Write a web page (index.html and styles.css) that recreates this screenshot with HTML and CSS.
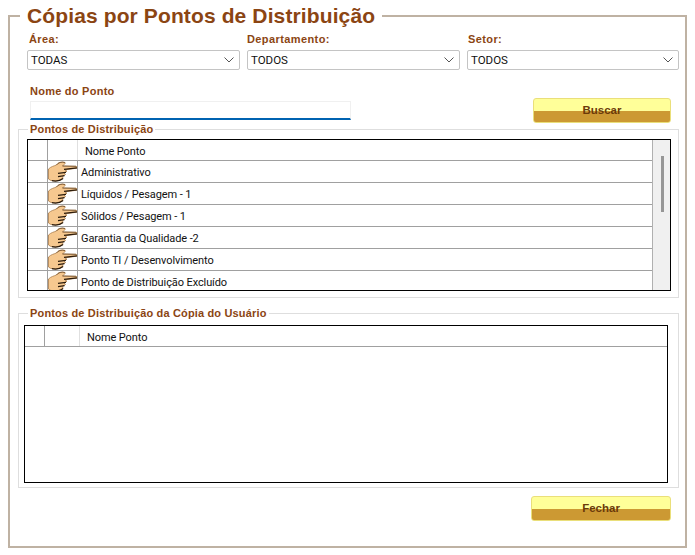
FILE: index.html
```html
<!DOCTYPE html>
<html lang="pt">
<head>
<meta charset="utf-8">
<title>Cópias por Pontos de Distribuição</title>
<link rel="stylesheet" href="styles.css">
</head>
<body>
<svg class="defs" width="0" height="0" aria-hidden="true">
  <symbol id="hand" viewBox="0 0 30 21">
    <path d="M.5 8 C3 5.500 6 5 8.500 4 C10 1.500 13.500 .5 17 1.500 C18.500 2.200 15.500 3.500 14.500 5 L28 5.300 C29.800 5.800 29.800 7 28 7.300 L17 8.800 L19 10.200 L16 12 L17.500 13.500 L14.500 15.500 L15 17.500 C12 20 6 20.500 2.500 19.300 L.5 18 Z" fill="#f6c88f" stroke="#a87a48" stroke-width=".8"/>
    <path d="M14.500 5 L28 5.300 M8.500 4 C10 1.500 13.500 .5 17 1.500" fill="none" stroke="#6a4a28" stroke-width=".7"/>
    <path d="M16 8.300 L29 6.900 M10 12.300 L18 11.300 M10 15.700 L16.500 14.700 M4 19.700 C8 20.500 12 20 15 17.500" fill="none" stroke="#2c1c0c" stroke-width="1.200"/>
  </symbol>
</svg>
<fieldset class="panel">
  <legend class="panel-title">Cópias por Pontos de Distribuição</legend>
  <div class="filters">
    <div class="filter">
      <label class="label">Área:</label>
      <div class="select"><span>TODAS</span><svg class="chev" viewBox="0 0 10 6"><path d="M.5 .5 5 5 9.500 .5" fill="none" stroke="#555"/></svg></div>
    </div>
    <div class="filter">
      <label class="label">Departamento:</label>
      <div class="select"><span>TODOS</span><svg class="chev" viewBox="0 0 10 6"><path d="M.5 .5 5 5 9.500 .5" fill="none" stroke="#555"/></svg></div>
    </div>
    <div class="filter">
      <label class="label">Setor:</label>
      <div class="select"><span>TODOS</span><svg class="chev" viewBox="0 0 10 6"><path d="M.5 .5 5 5 9.500 .5" fill="none" stroke="#555"/></svg></div>
    </div>
  </div>
  <div class="search">
    <div class="search-field">
      <label class="label">Nome do Ponto</label>
      <div class="input"></div>
    </div>
    <button class="btn btn-search">Buscar</button>
  </div>
  <fieldset class="group group-one">
    <legend class="group-title">Pontos de Distribuição</legend>
    <div class="grid grid-one">
      <div class="grid-main">
        <div class="row head"><div class="c1"></div><div class="c2"></div><div class="c3 head-text">Nome Ponto</div></div>
        <div class="row"><div class="c1"></div><div class="c2"><svg class="hand"><use href="#hand"/></svg></div><div class="c3">Administrativo</div></div>
        <div class="row"><div class="c1"></div><div class="c2"><svg class="hand"><use href="#hand"/></svg></div><div class="c3">Líquidos / Pesagem - 1</div></div>
        <div class="row"><div class="c1"></div><div class="c2"><svg class="hand"><use href="#hand"/></svg></div><div class="c3">Sólidos / Pesagem - 1</div></div>
        <div class="row"><div class="c1"></div><div class="c2"><svg class="hand"><use href="#hand"/></svg></div><div class="c3">Garantia da Qualidade -2</div></div>
        <div class="row"><div class="c1"></div><div class="c2"><svg class="hand"><use href="#hand"/></svg></div><div class="c3">Ponto TI / Desenvolvimento</div></div>
        <div class="row"><div class="c1"></div><div class="c2"><svg class="hand"><use href="#hand"/></svg></div><div class="c3">Ponto de Distribuição Excluído</div></div>
      </div>
      <div class="scroll"><div class="thumb"></div></div>
    </div>
  </fieldset>
  <fieldset class="group group-two">
    <legend class="group-title">Pontos de Distribuição da Cópia do Usuário</legend>
    <div class="grid grid-two">
      <div class="grid-main">
        <div class="row head"><div class="c1"></div><div class="c2 wide"></div><div class="c3 head-text">Nome Ponto</div></div>
      </div>
    </div>
  </fieldset>
  <div class="footer"><button class="btn btn-close">Fechar</button></div>
</fieldset>
</body>
</html>
```
FILE: styles.css
```css
* { box-sizing: border-box; }
html, body { margin: 0; padding: 0; background: #fff; }
body { width: 695px; height: 555px; overflow: hidden; font-family: "Liberation Sans", Arial, sans-serif; }
.defs { position: absolute; }
.panel {
  margin: 4px 8px 0 8px; padding: 0 5px 0 8px; width: 679px; height: 544px;
  border: 2px solid #bfb2a3; min-width: 0;
}
.panel-title {
  margin-left: 2px; padding: 0 7px; font-size: 21px; font-weight: bold; line-height: 24px; color: #8b4513;
  letter-spacing: .12px;
}
.filters { display: flex; gap: 7px; margin-top: 4px; margin-left: 9px; }
.filter { width: 213px; display: flex; flex-direction: column; }
.filter:last-child { width: 212px; }
.label { font-size: 11px; font-weight: bold; line-height: 14px; color: #8b4513; letter-spacing: .25px; display: block; }
.filter .label { height: 18px; letter-spacing: .4px; padding-left: 1px; }
.filter:first-child .label { padding-left: 2px; }
.filter:nth-child(2) .label { padding-left: 0; }
.select {
  height: 20px; border: 1px solid #c4c4c4; border-radius: 2px; background: #fff; padding: 0 3px;
  display: flex; align-items: center; justify-content: space-between;
  font-family: Roboto, sans-serif; font-size: 11.5px; color: #111;
}
.chev { width: 10px; height: 6px; margin-right: 2px; }
.search { display: flex; justify-content: space-between; margin-left: 12px; margin-top: 14px; height: 46px; }
.search-field { width: 321px; display: flex; flex-direction: column; }
.search-field .label { height: 17px; }
.input { height: 19px; border: 1px solid #f0f0f0; border-bottom: 2px solid #0063b1; background: #fff; }
.btn {
  font-family: "Liberation Sans", sans-serif; font-weight: bold; font-size: 11.5px; color: #6b3a0a;
  border: 1px solid #eadf7a; border-radius: 3px; height: 25px; padding: 0 0 2px;
  background: linear-gradient(#ffff99 0 12px, #cc9933 12px);
}
.btn-search { width: 138px; margin-right: 9px; margin-top: 14px; }
.group { margin: 0; padding: 0; border: 1px solid #dedede; width: 661px; min-width: 0; }
.group-title {
  margin-left: 9px; padding: 0 2px; font-size: 11px; font-weight: bold; line-height: 12px; color: #8b4513; letter-spacing: .16px;
}
.group-one { height: 175px; margin-top: -7px; }
.group-two { height: 181px; margin-top: 9px; }
.grid { border: 1px solid #000; background: #fff; display: flex; }
.grid-one { width: 644px; height: 152px; margin: 4px 0 0 8px; }
.grid-two { width: 644px; height: 158px; margin: 6px 0 0 5px; }
.grid-main { flex: 1; min-width: 0; overflow: hidden; }
.row { display: flex; height: 22px; border-bottom: 1px solid #a0a0a0; font-family: Roboto, sans-serif; font-size: 11px; line-height: 23px; letter-spacing: -.1px; color: #111; }
.head { height: 21px; }
.c1 { width: 20px; border-right: 1px solid #a0a0a0; }
.c2 { width: 30px; border-right: 1px solid #a0a0a0; overflow: hidden; }
.wide { width: 35px; }
.head .c2 { border-right-color: #e0e0e0; }
.c3 { flex: 1; padding-left: 3px; }
.head-text { padding-left: 7px; line-height: 24px; }
.hand { display: block; width: 30px; height: 21px; }
.scroll { width: 18px; background: #f0f0f0; border-left: 1px solid #b0b0b0; padding: 16px 0 0 8px; }
.thumb { width: 3px; height: 56px; background: #969696; }
.footer { display: flex; justify-content: flex-end; padding-right: 9px; margin-top: 8px; }
.btn-close { width: 140px; }
```
